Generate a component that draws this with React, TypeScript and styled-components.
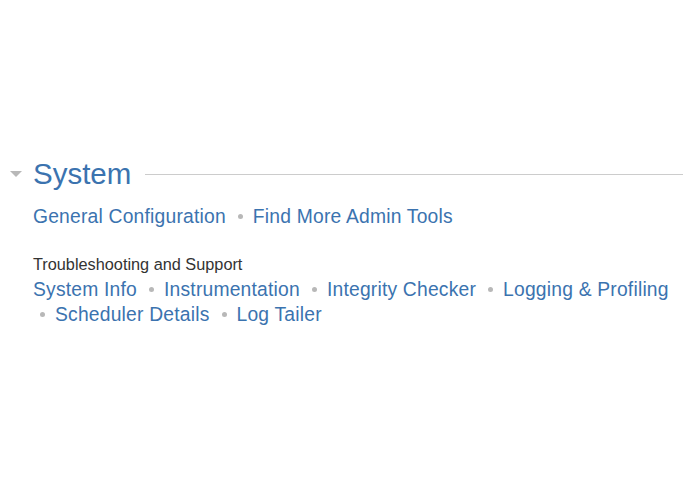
import React from 'react';
import styled, { createGlobalStyle } from 'styled-components';

// styles
const GlobalStyle = createGlobalStyle`
  html, body {
    margin: 0;
    padding: 0;
    background-color: #ffffff;
  }
  body {
    font-family: "Liberation Sans", Arial, sans-serif;
  }
`;

const Page = styled.main`
  width: 695px;
  height: 494px;
  box-sizing: border-box;
  padding: 156px 12px 0 10px;
`;

const Header = styled.header`
  display: flex;
  align-items: center;
`;

const Toggle = styled.span`
  width: 0;
  height: 0;
  margin: 0 11px 0 0;
  border-left: 6px solid transparent;
  border-right: 6px solid transparent;
  border-top: 6px solid #b8b8b8;
`;

const Title = styled.h2`
  margin: 0;
  font-size: 29.5px;
  font-weight: normal;
  line-height: 36px;
  color: #3b73af;
`;

const Rule = styled.span`
  flex: 1;
  margin-left: 14px;
  border-top: 1px solid #cccccc;
`;

const Body = styled.div`
  padding-left: 23px;
`;

const LinkList = styled.ul<{ $spaced?: boolean }>`
  display: flex;
  flex-wrap: wrap;
  margin: ${(p) => (p.$spaced ? '12px 0 25px' : '0')};
  padding: 0;
  list-style: none;
  font-size: 19.3px;
  line-height: 25px;
  letter-spacing: 0.2px;
`;

const Item = styled.li`
  display: flex;
  align-items: center;
  margin-right: 5px;
  &:not(:first-child)::before {
    content: '';
    width: 5px;
    height: 5px;
    margin: 0 10px 0 7px;
    border-radius: 50%;
    background-color: #b8b8b8;
  }
`;

const Link = styled.a`
  color: #3b73af;
  text-decoration: none;
`;

const SubHeading = styled.h3`
  margin: 0 0 3px;
  font-size: 16.3px;
  font-weight: normal;
  line-height: 20px;
  color: #333333;
`;

const general = ['General Configuration', 'Find More Admin Tools'];
const support = [
  'System Info',
  'Instrumentation',
  'Integrity Checker',
  'Logging & Profiling',
  'Scheduler Details',
  'Log Tailer',
];

// logic
const App = () => {
  return (
    <>
      <GlobalStyle />
      <Page>
        <Header>
          <Toggle />
          <Title>System</Title>
          <Rule />
        </Header>
        <Body>
          <LinkList $spaced>
            {general.map((label) => (
              <Item key={label}>
                <Link href="#">{label}</Link>
              </Item>
            ))}
          </LinkList>
          <SubHeading>Troubleshooting and Support</SubHeading>
          <LinkList>
            {support.map((label) => (
              <Item key={label}>
                <Link href="#">{label}</Link>
              </Item>
            ))}
          </LinkList>
        </Body>
      </Page>
    </>
  );
};

export default App;
